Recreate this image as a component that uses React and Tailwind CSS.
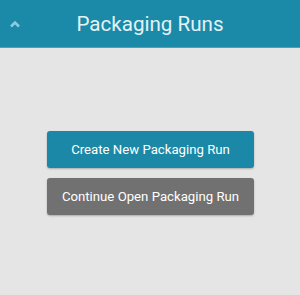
export default function App() {
  return (
    <div className="w-[300px] h-[295px] bg-[#e5e5e5] flex flex-col" style={{ fontFamily: "Roboto, 'Liberation Sans', sans-serif" }}>
      <div className="h-[48px] bg-[#1b8aa8] border-b border-[#4aa3bc] flex items-center relative shrink-0">
        <svg className="absolute left-[9px] top-[20px]" width="12" height="8" viewBox="0 0 12 8">
          <path d="M2 6.5 L6 2.5 L10 6.5" fill="none" stroke="#8ccbdc" strokeWidth="2.6" />
        </svg>
        <div className="w-full text-center text-[20.6px] text-[#e3f2f6] leading-none pt-[1px]">Packaging Runs</div>
      </div>
      <div className="flex flex-col items-center pt-[83px] gap-[10px] pl-[1px]">
        <button className="w-[207px] h-[37px] rounded-[3px] bg-[#1a88a6] text-white text-[13.2px] shadow-[0_1px_2px_rgba(0,0,0,0.25)]">Create New Packaging Run</button>
        <button className="w-[207px] h-[37px] rounded-[3px] bg-[#717171] text-white text-[13.2px] shadow-[0_1px_2px_rgba(0,0,0,0.25)]">Continue Open Packaging Run</button>
      </div>
    </div>
  );
}
